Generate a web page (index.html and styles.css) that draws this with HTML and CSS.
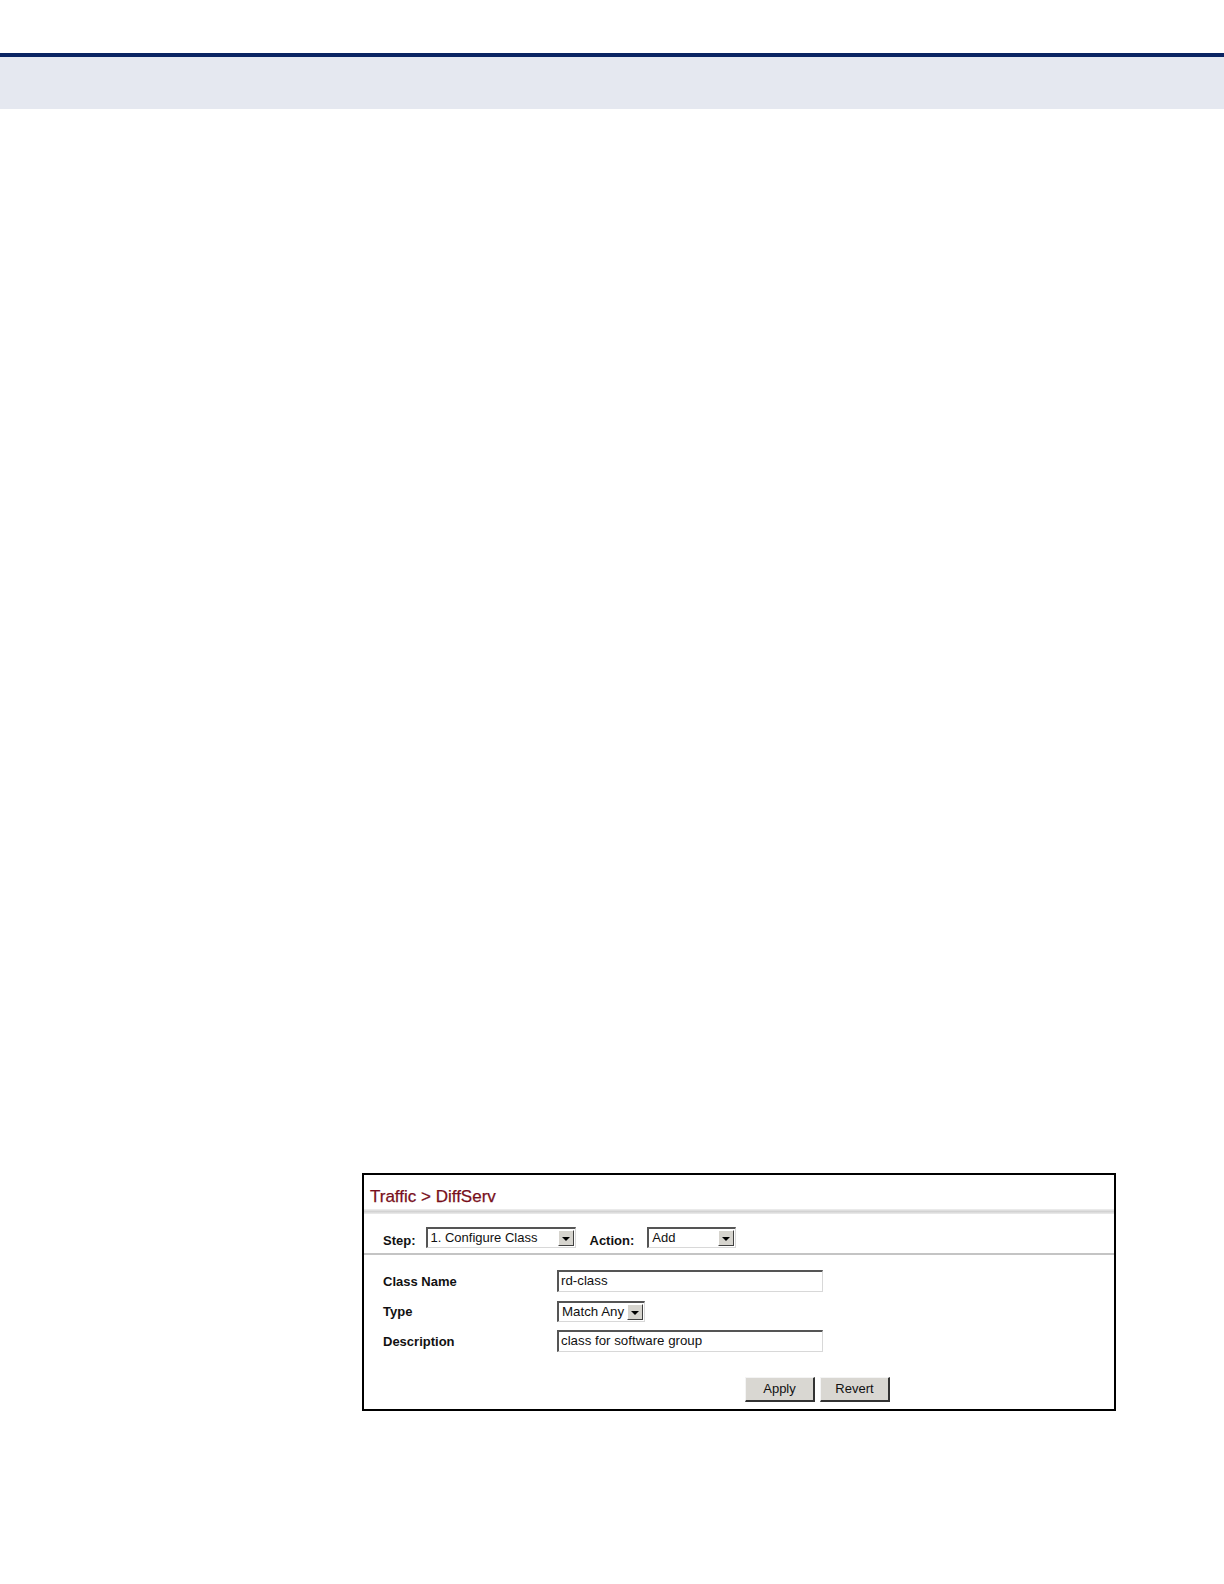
FILE: index.html
```html
<!DOCTYPE html>
<html>
<head>
<meta charset="utf-8">
<link rel="stylesheet" href="styles.css">
</head>
<body>
<header class="topbar"></header>
<main class="content">
  <section class="panel">
    <div class="panel-title">Traffic &gt; DiffServ</div>
    <div class="title-rule"></div>
    <div class="step-row">
      <span class="lbl">Step:</span>
      <div class="sel sel-step"><span class="sel-text">1. Configure Class</span><span class="arrow"></span></div>
      <span class="lbl lbl-action">Action:</span>
      <div class="sel sel-action"><span class="sel-text">Add</span><span class="arrow"></span></div>
    </div>
    <div class="step-rule"></div>
    <div class="form">
      <div class="frow">
        <span class="flabel">Class Name</span>
        <div class="inp">rd-class</div>
      </div>
      <div class="frow">
        <span class="flabel">Type</span>
        <div class="sel sel-type"><span class="sel-text">Match Any</span><span class="arrow"></span></div>
      </div>
      <div class="frow">
        <span class="flabel">Description</span>
        <div class="inp">class for software group</div>
      </div>
    </div>
    <div class="buttons">
      <div class="btn">Apply</div>
      <div class="btn">Revert</div>
    </div>
  </section>
</main>
</body>
</html>
```

FILE: styles.css
```css
html, body {
  margin: 0;
  padding: 0;
  background: #ffffff;
  font-family: "Liberation Sans", Arial, sans-serif;
}
.topbar {
  margin-top: 53px;
  height: 52px;
  border-top: 4px solid #0a2463;
  background: #e5e8f0;
}
.content {
  padding-top: 1064px;
  padding-left: 362px;
}
.panel {
  box-sizing: border-box;
  width: 754px;
  height: 238px;
  border: 2px solid #000;
  display: flex;
  flex-direction: column;
}
.panel-title {
  height: 34px;
  padding-left: 6px;
  box-sizing: border-box;
  padding-top: 13px;
  font-size: 17px;
  line-height: 18px;
  color: #780f1c;
  -webkit-text-stroke: 0.25px #780f1c;
}
.title-rule {
  height: 5px;
  background: linear-gradient(#f0f0f0, #d2d2d2 50%, #ececec);
}
.step-row {
  display: flex;
  align-items: flex-start;
  height: 39px;
  box-sizing: border-box;
  padding-top: 13px;
  padding-left: 19px;
  font-size: 13px;
}
.lbl {
  font-weight: bold;
  color: #111;
  line-height: 21px;
  margin-top: 3px;
}
.lbl-action {
  margin-left: 14px;
}
.sel {
  box-sizing: border-box;
  height: 21px;
  display: flex;
  align-items: stretch;
  border-top: 2px solid #555;
  border-left: 2px solid #555;
  border-right: 1px solid #d8d8d8;
  border-bottom: 1px solid #d8d8d8;
  background: #fff;
  font-size: 13px;
  color: #111;
}
.sel-text {
  flex: 1;
  padding-left: 3px;
  line-height: 17px;
  white-space: nowrap;
}
.arrow {
  width: 16px;
  margin: 1px 1px 1px 0;
  background: #d6d4ce;
  border-top: 1px solid #fff;
  border-left: 1px solid #fff;
  border-right: 1px solid #404040;
  border-bottom: 1px solid #404040;
  position: relative;
  box-sizing: border-box;
}
.arrow::after {
  content: "";
  position: absolute;
  left: 3px;
  top: 6px;
  border-left: 4px solid transparent;
  border-right: 4px solid transparent;
  border-top: 4px solid #000;
}
.sel-step {
  width: 150px;
  margin-left: 10px;
}
.sel-action {
  width: 89px;
  margin-left: 13px;
}
.sel-type {
  width: 88px;
  font-size: 13.3px;
}
.step-rule {
  height: 2px;
  background: #c4c4c4;
}
.form {
  display: flex;
  flex-direction: column;
  gap: 8px;
  padding-top: 15px;
  padding-left: 19px;
}
.frow {
  display: flex;
  align-items: center;
  height: 22px;
}
.flabel {
  width: 174px;
  font-size: 13px;
  font-weight: bold;
  color: #111;
}
.inp {
  box-sizing: border-box;
  width: 266px;
  height: 22px;
  border-top: 2px solid #555;
  border-left: 2px solid #555;
  border-right: 1px solid #d8d8d8;
  border-bottom: 1px solid #d8d8d8;
  padding-left: 2px;
  font-size: 13.3px;
  line-height: 18px;
  color: #111;
}
.buttons {
  display: flex;
  gap: 5px;
  padding-left: 381px;
  padding-top: 25px;
}
.btn {
  box-sizing: border-box;
  width: 70px;
  height: 25px;
  background: #d9d7d2;
  border-top: 1px solid #f4f4f4;
  border-left: 1px solid #f4f4f4;
  border-right: 2px solid #333;
  border-bottom: 2px solid #333;
  font-size: 13px;
  line-height: 22px;
  text-align: center;
  color: #111;
}
```
